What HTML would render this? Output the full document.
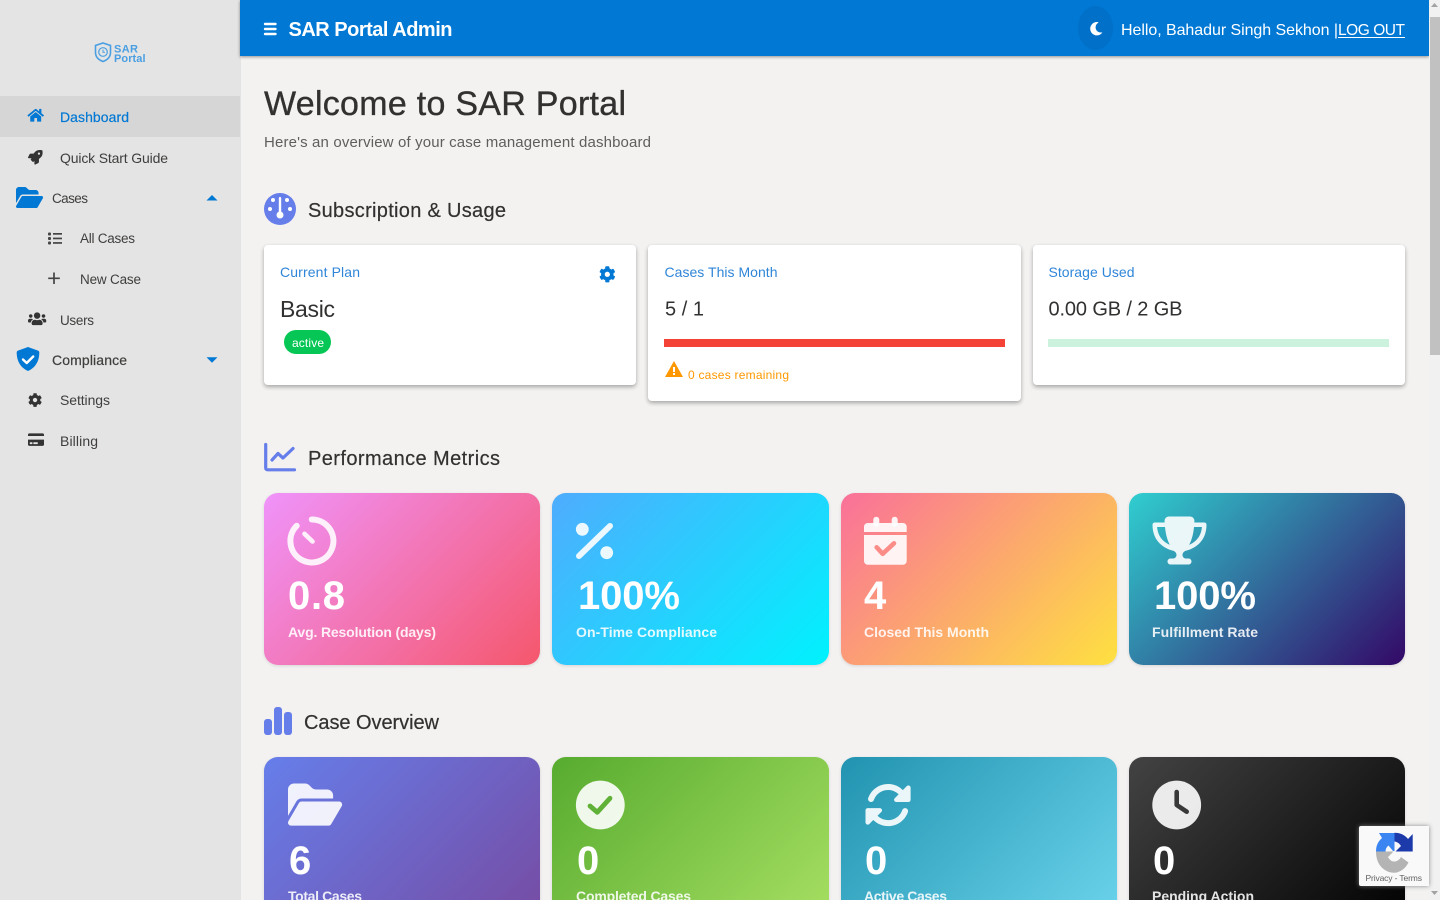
<!DOCTYPE html>
<html lang="en">
<head>
<meta charset="utf-8">
<title>SAR Portal Admin</title>
<style>
html,body{margin:0;padding:0;width:1440px;height:900px;overflow:hidden;background:#f3f2f1;font-family:"Liberation Sans",Arial,sans-serif}
.page{position:relative;width:1440px;height:900px;overflow:hidden;background:#f3f2f1}
.b{position:absolute;box-sizing:border-box}
.card{background:#fff;border-radius:4px;box-shadow:0 2px 4px rgba(0,0,0,.32)}
.tile{border-radius:14px;box-shadow:0 1px 3px rgba(0,0,0,.12)}
svg.o{position:absolute;left:0;top:0}
svg text{font-family:"Liberation Sans",Arial,sans-serif;white-space:pre}
.nav{font-size:14px;fill:#3f3e3d}
.h{font-size:20px;fill:#323130;stroke:#323130;stroke-width:.2}
.cl{font-size:14px;fill:#2f86d8}
.val{font-size:20px;fill:#323130}
.num{font-size:40px;font-weight:700;fill:#fff}
.lab{font-size:14px;font-weight:700;fill:#fff;fill-opacity:.88}
.ic{fill:#fff;fill-opacity:.9}
</style>
</head>
<body>
<div class="page">
<div class="b" style="left:0;top:0;width:241px;height:900px;background:#e4e4e4"></div>
<div class="b" style="left:0;top:96px;width:240px;height:41px;background:#d6d6d6"></div>
<div class="b" style="left:240px;top:0;width:1189px;height:56px;background:#0078d4;box-shadow:0 1px 3px rgba(0,0,0,.4)"></div>
<div class="b" style="left:1078px;top:6px;width:35px;height:44px;border-radius:50%;background:#0070c8"></div>

<div class="b" style="left:1429px;top:0;width:11px;height:900px;background:#f1f1f1"></div>
<div class="b" style="left:1430px;top:17px;width:10px;height:338px;background:#c1c1c1"></div>

<div class="b card" style="left:264px;top:245px;width:372px;height:140px"></div>
<div class="b card" style="left:648px;top:245px;width:373px;height:156px"></div>
<div class="b card" style="left:1033px;top:245px;width:372px;height:140px"></div>
<div class="b" style="left:664px;top:339px;width:341px;height:8px;background:#f44336"></div>
<div class="b" style="left:1048px;top:339px;width:341px;height:8px;background:#ccf2dd"></div>
<div class="b" style="left:284px;top:330px;width:47px;height:24px;border-radius:12px;background:#06c755"></div>

<div class="b tile" style="left:264px;top:493px;width:276px;height:172px;background:linear-gradient(135deg,#f093fb,#f5576c)"></div>
<div class="b tile" style="left:552px;top:493px;width:277px;height:172px;background:linear-gradient(135deg,#4facfe,#00f2fe)"></div>
<div class="b tile" style="left:841px;top:493px;width:276px;height:172px;background:linear-gradient(135deg,#fa709a,#fee140)"></div>
<div class="b tile" style="left:1129px;top:493px;width:276px;height:172px;background:linear-gradient(135deg,#30cfd0,#330867)"></div>

<div class="b tile" style="left:264px;top:757px;width:276px;height:172px;background:linear-gradient(135deg,#667eea,#764ba2)"></div>
<div class="b tile" style="left:552px;top:757px;width:277px;height:172px;background:linear-gradient(135deg,#56ab2f,#a8e063)"></div>
<div class="b tile" style="left:841px;top:757px;width:276px;height:172px;background:linear-gradient(135deg,#2193b0,#6dd5ed)"></div>
<div class="b tile" style="left:1129px;top:757px;width:276px;height:172px;background:linear-gradient(135deg,#434343,#000)"></div>

<div class="b" style="left:1359px;top:826px;width:70px;height:60px;background:#f9f9f9;border-radius:2px 0 0 2px;box-shadow:0 0 5px rgba(128,128,128,.9)"></div>

<svg class="o" width="1440" height="900" viewBox="0 0 1440 900" xmlns="http://www.w3.org/2000/svg">
<defs>
<path id="cog" d="M487.4 315.7l-42.6-24.6c4.3-23.2 4.3-47 0-70.2l42.6-24.6c4.9-2.8 7.1-8.6 5.5-14-11.1-35.6-30-67.8-54.7-94.6-3.8-4.1-10-5.1-14.8-2.3L380.8 110c-17.9-15.4-38.5-27.3-60.8-35.1V25.8c0-5.6-3.9-10.5-9.4-11.7-36.7-8.2-74.3-7.8-109.2 0-5.5 1.2-9.4 6.1-9.4 11.7V75c-22.2 7.9-42.8 19.8-60.8 35.1L88.7 85.5c-4.9-2.8-11-1.9-14.8 2.3-24.7 26.7-43.6 58.9-54.7 94.6-1.7 5.4.6 11.2 5.5 14L67.3 221c-4.3 23.2-4.3 47 0 70.2l-42.6 24.6c-4.9 2.8-7.1 8.6-5.5 14 11.1 35.6 30 67.8 54.7 94.6 3.8 4.1 10 5.1 14.8 2.3l42.6-24.6c17.9 15.4 38.5 27.3 60.8 35.1v49.2c0 5.6 3.9 10.5 9.4 11.7 36.7 8.2 74.3 7.8 109.2 0 5.5-1.2 9.4-6.1 9.4-11.7v-49.2c22.2-7.9 42.8-19.8 60.8-35.1l42.6 24.6c4.9 2.8 11 1.9 14.8-2.3 24.7-26.7 43.6-58.9 54.7-94.6 1.5-5.5-.7-11.3-5.6-14.1zM256 336c-44.1 0-80-35.9-80-80s35.9-80 80-80 80 35.9 80 80-35.9 80-80 80z"/>
<path id="folder" d="M88.7 223.8L0 375.8V96C0 60.7 28.7 32 64 32H181.5c17 0 33.3 6.7 45.3 18.7l26.5 26.5c12 12 28.3 18.7 45.3 18.7H416c35.3 0 64 28.7 64 64v32H144c-22.8 0-43.8 12.1-55.3 31.8zm27.6 16.1C122.1 230 132.6 224 144 224H544c11.5 0 22 6.1 27.7 16.1s5.7 22.2-.1 32.1l-112 192C453.9 474 443.4 480 432 480H32c-11.5 0-22-6.1-27.7-16.1s-5.7-22.2 .1-32.1l112-192z"/>
</defs>

<!-- logo -->
<g fill="none" stroke="#4a9fe2">
<path stroke-width="1.6" d="M103 43l7.5 2.5v7c0 4.5-3.5 7.5-7.5 9c-4-1.5-7.5-4.5-7.5-9v-7z"/>
<circle cx="103" cy="52" r="4.3" stroke-width="1.2"/>
<path stroke-width="1" d="M103 49.500V52.300h2"/>
</g>
<text x="114" y="52.500" font-size="11" font-weight="700" fill="#4a9fe2" textLength="24">SAR</text>
<text x="114" y="62" font-size="11" font-weight="700" fill="#4a9fe2" textLength="31.500">Portal</text>

<!-- sidebar icons -->
<path fill="#0078d4" transform="translate(27.500,108) scale(.0285)" d="M280.37 148.26L96 300.11V464a16 16 0 0 0 16 16l112.06-.29a16 16 0 0 0 15.92-16V368a16 16 0 0 1 16-16h64a16 16 0 0 1 16 16v95.64a16 16 0 0 0 16 16.05L464 480a16 16 0 0 0 16-16V300L295.67 148.26a12.19 12.19 0 0 0-15.3 0zM571.6 251.47L488 182.56V44.05a12 12 0 0 0-12-12h-56a12 12 0 0 0-12 12v72.61L318.47 43a48 48 0 0 0-61 0L4.34 251.47a12 12 0 0 0-1.6 16.9l25.5 31A12 12 0 0 0 45.15 301l235.22-193.74a12.19 12.19 0 0 1 15.3 0L530.9 301a12 12 0 0 0 16.9-1.6l25.5-31a12 12 0 0 0-1.7-16.93z"/>
<path fill="#333" transform="translate(28,150) scale(.0285)" d="M505.12 19.09c-1.19-5.53-6.66-11-12.21-12.19C460.72 0 435.51 0 410.41 0 307.18 0 245.27 55.2 199.05 128H94.84c-16.35.02-35.56 11.88-42.89 26.48L2.52 253.3A28.4 28.4 0 0 0 0 264a24 24 0 0 0 24 24h103.81l-22.47 22.47c-11.37 11.36-13 32.26 0 45.25l50.9 50.9c11.16 11.19 32.16 13.16 45.28 0L224 384.16V488a24 24 0 0 0 24 24 28.56 28.56 0 0 0 10.71-2.52l98.73-49.39c14.63-7.3 26.51-26.5 26.51-42.86V312.8c72.6-46.31 128.03-108.41 128.03-211.1C512.08 76.5 512.08 51.3 505.12 19.09zM384.04 168a40 40 0 1 1 40.01-40 40 40 0 0 1-40.01 40z"/>
<use href="#folder" fill="#0078d4" transform="translate(16,185.500) scale(.047)"/>
<path fill="#0078d4" d="M212 195l5.500 5.500h-11z"/>
<g fill="#444">
<rect x="48" y="232.500" width="3" height="3" rx="1"/><rect x="48" y="237" width="3" height="3" rx="1"/><rect x="48" y="241.500" width="3" height="3" rx="1"/>
<rect x="53" y="233" width="9" height="1.700"/><rect x="53" y="237.600" width="9" height="1.700"/><rect x="53" y="242.100" width="9" height="1.700"/>
</g>
<path stroke="#444" stroke-width="1.700" fill="none" d="M54 272.500v11.500M48.200 278.300h11.600"/>
<path fill="#333" transform="translate(28,311.500) scale(.0285)" d="M96 224c35.3 0 64-28.7 64-64s-28.7-64-64-64-64 28.7-64 64 28.7 64 64 64zm448 0c35.3 0 64-28.7 64-64s-28.7-64-64-64-64 28.7-64 64 28.7 64 64 64zm32 32h-64c-17.6 0-33.5 7.1-45.1 18.6 40.3 22.1 68.9 62 75.1 109.4h66c17.7 0 32-14.3 32-32v-32c0-35.3-28.7-64-64-64zm-256 0c61.9 0 112-50.1 112-112S381.9 32 320 32 208 82.1 208 144s50.1 112 112 112zm76.8 32h-8.3c-20.8 10-43.9 16-68.5 16s-47.6-6-68.5-16h-8.3C179.6 288 128 339.6 128 403.2V432c0 26.5 21.5 48 48 48h288c26.5 0 48-21.5 48-48v-28.8c0-63.6-51.6-115.2-115.2-115.2zm-223.7-13.4C161.5 263.1 145.6 256 128 256H64c-35.3 0-64 28.7-64 64v32c0 17.7 14.3 32 32 32h65.9c6.3-47.4 34.9-87.3 75.2-109.4z"/>
<path fill="#0078d4" d="M28 347l10 3.600c.8.300 1.300 1 1.300 1.900c0 7.500-3 14.800-11.300 18.500c-8.300-3.700-11.300-11-11.300-18.500c0-.9.500-1.600 1.300-1.900z"/>
<path fill="none" stroke="#fff" stroke-width="2.400" stroke-linecap="round" stroke-linejoin="round" d="M23 359.500l3.700 3.500l6.500-6.500"/>
<path fill="#0078d4" d="M206.500 357.200h11l-5.500 5.500z"/>
<use href="#cog" fill="#333" transform="translate(28,393) scale(.0275)"/>
<path fill="#333" transform="translate(28,432.500) scale(.0278)" d="M0 432c0 26.5 21.5 48 48 48h480c26.5 0 48-21.5 48-48V256H0v176zm192-68c0-6.6 5.4-12 12-12h136c6.6 0 12 5.4 12 12v40c0 6.6-5.4 12-12 12H204c-6.6 0-12-5.4-12-12v-40zm-128 0c0-6.6 5.4-12 12-12h72c6.6 0 12 5.4 12 12v40c0 6.6-5.4 12-12 12H76c-6.6 0-12-5.4-12-12v-40zM576 80v48H0V80c0-26.5 21.5-48 48-48h480c26.5 0 48 21.5 48 48z"/>

<!-- sidebar text -->
<text x="60" y="122" class="nav" style="fill:#0078d4;stroke:#0078d4;stroke-width:.2" textLength="69">Dashboard</text>
<text x="60" y="163" class="nav" textLength="108">Quick Start Guide</text>
<text x="52" y="203" class="nav" style="font-size:13.5px" textLength="36">Cases</text>
<text x="80" y="243" class="nav" style="font-size:13.5px" textLength="55">All Cases</text>
<text x="80" y="284" class="nav" style="font-size:13.5px" textLength="61">New Case</text>
<text x="60" y="325" class="nav" style="font-size:13.5px" textLength="34">Users</text>
<text x="52" y="365" class="nav" style="stroke:#3f3e3d;stroke-width:.2" textLength="75">Compliance</text>
<text x="60" y="405" class="nav" textLength="50">Settings</text>
<text x="60" y="446" class="nav" textLength="38">Billing</text>

<!-- top bar -->
<path fill="none" stroke="#fff" stroke-width="2.400" stroke-linecap="round" d="M265 24h10.500M265 29h10.500M265 34h10.500"/>
<text x="288.500" y="36" font-size="20" font-weight="700" fill="#fff" textLength="164">SAR Portal Admin</text>
<path fill="#fff" transform="translate(1089.500,22) scale(.0262)" d="M283.211 512c78.962 0 151.079-35.925 198.857-94.792 7.068-8.708-.639-21.430-11.562-19.350-124.203 23.654-238.262-71.576-238.262-196.954 0-72.222 38.662-138.635 101.498-174.394 9.686-5.512 7.250-20.197-3.756-22.230A258.156 258.156 0 0 0 283.211 0c-141.309 0-256 114.511-256 256 0 141.309 114.511 256 256 256z"/>
<text x="1121" y="35" font-size="16" fill="#fff" textLength="217">Hello, Bahadur Singh Sekhon |</text>
<text x="1338" y="35" font-size="15.500" fill="#fff" textLength="67">LOG OUT</text>
<rect x="1338" y="37" width="67" height="1" fill="#fff"/>

<!-- heading -->
<text x="264" y="115" font-size="34" fill="#323130" stroke="#323130" stroke-width=".35" textLength="362">Welcome to SAR Portal</text>
<text x="264" y="147" font-size="15" fill="#605e5c" textLength="387">Here's an overview of your case management dashboard</text>

<!-- subscription -->
<circle cx="280" cy="209" r="16" fill="#667eea"/>
<g fill="#fff">
<circle cx="270" cy="209" r="2"/><circle cx="290" cy="209" r="2"/><circle cx="273" cy="200" r="2"/><circle cx="287" cy="200" r="2"/>
<rect x="278.800" y="197" width="2.400" height="17" rx="1.200"/><circle cx="280" cy="215" r="3.500"/>
</g>
<text x="308" y="217" class="h" textLength="198">Subscription &amp; Usage</text>

<text x="280" y="277" class="cl" textLength="80">Current Plan</text>
<use href="#cog" fill="#0078d4" transform="translate(599,266) scale(.0325)"/>
<text x="280" y="317" font-size="23" fill="#323130" textLength="55">Basic</text>
<text x="292" y="347" font-size="12" fill="#fff" textLength="32">active</text>

<text x="664.500" y="277" class="cl" textLength="113">Cases This Month</text>
<text x="665" y="315.500" class="val" textLength="39">5 / 1</text>
<path fill="#ff9800" fill-rule="evenodd" d="M674 361l9 16h-18zM673 367v5h2v-5zM673 373v2h2v-2z"/>
<text x="688" y="379" font-size="12" fill="#ff9800" textLength="101">0 cases remaining</text>

<text x="1048.500" y="277" class="cl" textLength="86">Storage Used</text>
<text x="1048.500" y="315.500" class="val" textLength="134">0.00 GB / 2 GB</text>

<!-- performance -->
<g fill="none" stroke="#667eea" stroke-linecap="round" stroke-linejoin="round">
<path stroke-width="3.200" d="M265.700 444.500V468c0 1 .8 1.800 1.800 1.800H294.500"/>
<path stroke-width="3.200" d="M272 460l6-6.500l5 4.500l10-9.500"/>
</g>
<text x="308" y="465" class="h" textLength="192">Performance Metrics</text>

<g fill="none" stroke="#fff" stroke-opacity=".88" stroke-linecap="round">
<path stroke-width="6" d="M311.700 519.500a21.500 21.500 0 1 1-15 6.300"/>
<path stroke-width="4.600" d="M304.500 533.800l8 7.700"/>
</g>
<text x="288" y="609" class="num" textLength="57">0.8</text>
<text x="288" y="637" class="lab" textLength="148">Avg. Resolution (days)</text>

<g class="ic">
<circle cx="582.300" cy="529.300" r="6.400"/><circle cx="606.700" cy="552.700" r="6.400"/>
</g>
<path stroke="#fff" stroke-opacity=".9" stroke-width="6" stroke-linecap="round" d="M610 526l-31 30"/>
<text x="578" y="609" class="num" textLength="102">100%</text>
<text x="576" y="637" class="lab" textLength="141">On-Time Compliance</text>

<g class="ic">
<rect x="873.300" y="516.700" width="6" height="10" rx="3"/><rect x="891.700" y="516.700" width="6" height="10" rx="3"/>
<path d="M867.700 523h35.300a3.700 3.700 0 0 1 3.700 3.700V532h-42.700v-5.300a3.700 3.700 0 0 1 3.700-3.700z"/>
<path d="M864 535h42.700v26a3.700 3.700 0 0 1-3.700 3.700h-35.300a3.700 3.700 0 0 1-3.700-3.700z"/>
</g>
<path fill="none" stroke="#fc8c88" stroke-width="4.600" stroke-linecap="round" stroke-linejoin="round" d="M876.700 547.300l6 6.500l11.300-10.500"/>
<text x="864" y="609" class="num" textLength="23">4</text>
<text x="864" y="637" class="lab" textLength="125">Closed This Month</text>

<path class="ic" transform="translate(1152.500,516.500) scale(.09375)" d="M400 0H176c-26.5 0-48.100 21.800-47.100 48.200c.2 5.300 .4 10.600 .7 15.800H24C10.700 64 0 74.700 0 88c0 92.600 33.500 157 78.500 200.700c44.300 43.100 98.300 64.800 138.100 75.800c23.400 6.500 39.400 26 39.400 45.600c0 20.900-17 37.900-37.900 37.900H192c-17.700 0-32 14.300-32 32s14.300 32 32 32H384c17.700 0 32-14.300 32-32s-14.300-32-32-32H357.900C337 448 320 431 320 410.100c0-19.600 15.900-39.200 39.400-45.600c39.900-11 93.900-32.700 138.200-75.800C542.500 245 576 180.600 576 88c0-13.300-10.700-24-24-24H446.400c.3-5.200 .5-10.400 .7-15.800C448.100 21.800 426.500 0 400 0zM48.900 112h84.400c9.100 90.100 29.200 150.300 51.900 190.600c-24.900-11-50.800-26.500-73.200-48.300c-32-31.100-58-76-63-142.300zM464.100 254.300c-22.400 21.800-48.300 37.300-73.200 48.300c22.700-40.300 42.800-100.500 51.900-190.600h84.400c-5.100 66.300-31.100 111.200-63 142.300z"/>
<text x="1154" y="609" class="num" textLength="102">100%</text>
<text x="1152" y="637" class="lab" textLength="106">Fulfillment Rate</text>

<!-- case overview -->
<g fill="#667eea">
<rect x="264" y="719" width="8" height="16" rx="3"/><rect x="274" y="707" width="8" height="28" rx="3"/><rect x="284" y="712" width="8" height="23" rx="3"/>
</g>
<text x="304" y="729" class="h" textLength="135">Case Overview</text>

<use href="#folder" class="ic" transform="translate(288,780.500) scale(.094)"/>
<text x="289" y="874" class="num" textLength="21">6</text>
<text x="288" y="901" class="lab" textLength="74">Total Cases</text>

<circle class="ic" cx="600.300" cy="805" r="24.400"/>
<path fill="none" stroke="#60b138" stroke-width="4.800" stroke-linecap="round" stroke-linejoin="round" d="M590 806l7.300 6.300l12.700-14"/>
<text x="577" y="874" class="num" textLength="21">0</text>
<text x="576" y="901" class="lab" textLength="115">Completed Cases</text>

<path class="ic" transform="translate(864,781) scale(.094)" d="M142.900 142.900c-17.500 17.500-30.100 38-37.800 59.800c-5.900 16.700-24.200 25.400-40.800 19.500s-25.400-24.200-19.500-40.800C55.600 150.700 73.200 122 97.600 97.600c87.200-87.200 228.300-87.500 315.800-1L455 55c6.900-6.900 17.200-8.900 26.200-5.200s14.800 12.500 14.800 22.200l0 128c0 13.300-10.700 24-24 24l-8.400 0c-.1 0-.2 0-.3 0L344 224c-9.700 0-18.500-5.800-22.200-14.800s-1.700-19.300 5.200-26.200l41.100-41.100c-62.600-61.500-163.100-61.200-225.300 1zM16 312c0-13.300 10.700-24 24-24l7.600 0 .7 0L168 288c9.700 0 18.500 5.800 22.200 14.800s1.700 19.300-5.200 26.200l-41.100 41.100c62.600 61.500 163.100 61.200 225.300-1c17.500-17.500 30.100-38 37.800-59.800c5.900-16.700 24.200-25.400 40.800-19.500s25.400 24.200 19.500 40.800c-10.800 30.600-28.400 59.300-52.900 83.800c-87.200 87.200-228.300 87.500-315.800 1L57 457c-6.900 6.900-17.200 8.900-26.200 5.200S16 449.700 16 440l0-119.600 0-.7 0-7.600z"/>
<text x="865" y="874" class="num" textLength="21">0</text>
<text x="864" y="901" class="lab" textLength="83">Active Cases</text>

<circle class="ic" cx="1176.700" cy="805" r="24.400"/>
<path fill="none" stroke="#383838" stroke-width="4.600" stroke-linecap="round" stroke-linejoin="round" d="M1176.700 792v13l10 6.700"/>
<text x="1153" y="874" class="num" textLength="21">0</text>
<text x="1152" y="901" class="lab" textLength="102">Pending Action</text>

<!-- scrollbar arrows -->
<path fill="#a3a3a3" d="M1434.500 3l3.500 4h-7z"/>
<path fill="#a3a3a3" d="M1431 891h7l-3.500 4z"/>

<!-- recaptcha -->
<path fill="#b4b4b4" d="M1376 851.500H1393.500L1388 857C1389.500 859.800 1391.500 861.500 1394 861.500C1397 861.500 1399.500 859.800 1401 857L1408.500 862.500C1405.500 868.500 1400 872.700 1394 872.700C1387 872.700 1381 868.500 1378 862C1376.500 858.500 1376 855 1376 851.500Z"/>
<path fill="#3a85f2" d="M1376 851.500C1376 845.500 1378 841.500 1382 838L1379 833H1394.500V851H1393L1388.500 845.500C1386.500 847 1385.500 849 1385.500 851.500Z"/>
<path fill="#1c3aa9" d="M1394.500 832.700C1400 832.700 1405 835 1408 839L1412.700 834V851.500H1395.500L1401 846C1399.500 843.500 1397 841.800 1394.500 841.500Z"/>
<text x="1365.500" y="881" font-size="8.500" fill="#5f5f5f" textLength="56.500">Privacy - Terms</text>
</svg>
</div>
</body>
</html>
